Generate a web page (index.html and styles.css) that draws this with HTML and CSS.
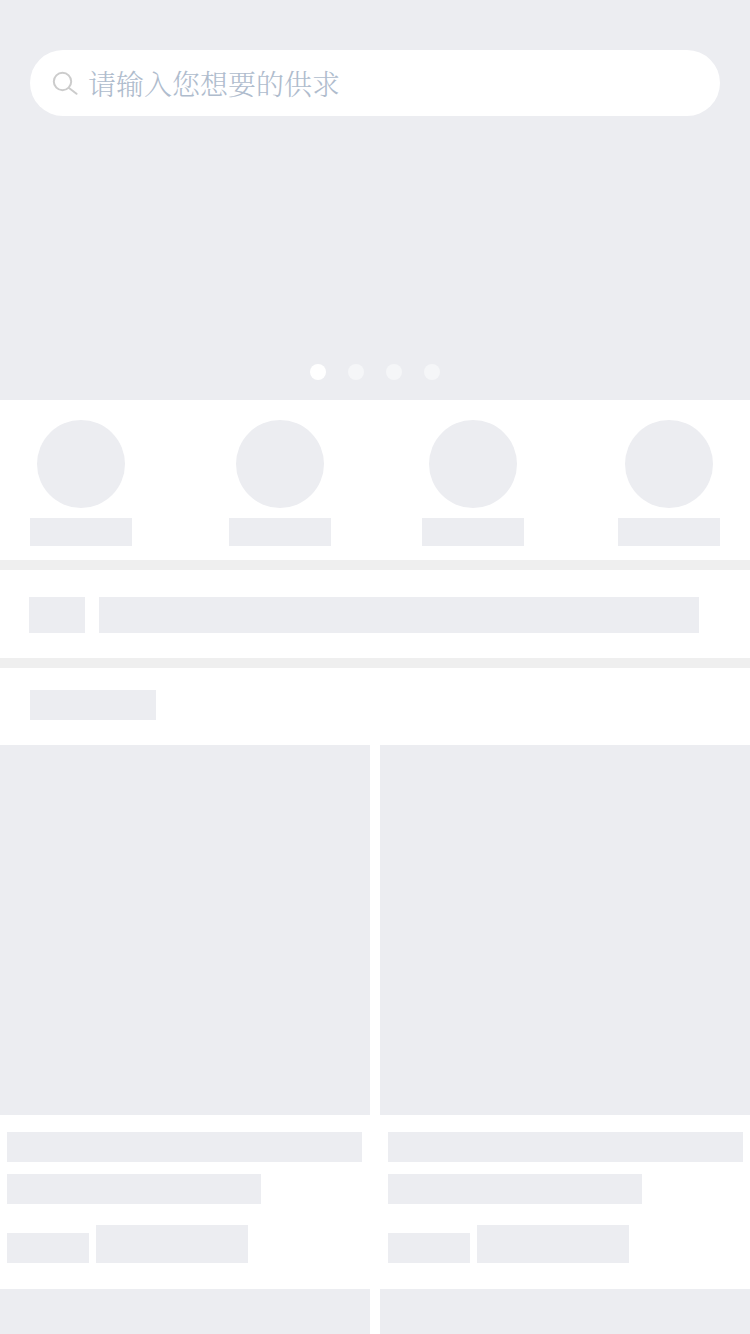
FILE: index.html
```html
<!DOCTYPE html>
<html lang="zh-CN">
<head>
<meta charset="utf-8">
<meta name="viewport" content="width=device-width, initial-scale=1">
<title>供求</title>
<link rel="stylesheet" href="styles.css">
</head>
<body>
<div class="page">
  <header class="banner">
    <form class="search" role="search">
      <svg class="search-icon" viewBox="0 0 26 24" aria-hidden="true">
        <circle cx="10.5" cy="10.5" r="8.7"/>
        <path d="M17 17L24.5 22.8"/>
      </svg>
      <input class="search-input" type="search" aria-label="请输入您想要的供求" placeholder="请输入您想要的供求">
    </form>
    <div class="dots">
      <span class="dot dot-active"></span>
      <span class="dot"></span>
      <span class="dot"></span>
      <span class="dot"></span>
    </div>
  </header>
  <main class="content">
    <section class="categories">
      <div class="category"><div class="avatar"></div><div class="label"></div></div>
      <div class="category"><div class="avatar"></div><div class="label"></div></div>
      <div class="category"><div class="avatar"></div><div class="label"></div></div>
      <div class="category"><div class="avatar"></div><div class="label"></div></div>
    </section>
    <section class="notice">
      <div class="notice-tag"></div>
      <div class="notice-text"></div>
    </section>
    <div class="heading"><div class="heading-bar"></div></div>
    <section class="products">
      <article class="product">
        <div class="photo"></div>
        <div class="details">
          <div class="line"></div>
          <div class="line line-short"></div>
          <div class="meta"><div class="price"></div><div class="action"></div></div>
        </div>
      </article>
      <article class="product">
        <div class="photo"></div>
        <div class="details">
          <div class="line"></div>
          <div class="line line-short"></div>
          <div class="meta"><div class="price"></div><div class="action"></div></div>
        </div>
      </article>
    </section>
    <section class="products products-next">
      <div class="placeholder"></div>
      <div class="placeholder"></div>
    </section>
  </main>
</div>
</body>
</html>
```
FILE: styles.css
```css
:root {
  --block: #ecedf1;
  --divider: #efefef;
}

* {
  box-sizing: border-box;
}

body {
  margin: 0;
  background: #fff;
  font-family: "Noto Serif CJK SC", "Noto Sans CJK SC Light", "Noto Sans CJK SC", sans-serif;
}

.page,
.content {
  display: flex;
  flex-direction: column;
}

.page {
  min-height: 100vh;
}

.content {
  flex: 1;
}

.banner {
  display: flex;
  flex-direction: column;
  justify-content: space-between;
  min-height: 400px;
  padding: 50px 30px 20px;
  background: var(--block);
}

.search {
  display: flex;
  align-items: center;
  gap: 10px;
  height: 66px;
  padding: 0 30px 0 22px;
  border-radius: 33px;
  background: #fff;
}

.search-icon {
  flex: none;
  width: 26px;
  height: 24px;
  fill: none;
  stroke: #ccc;
  stroke-width: 2;
  stroke-linecap: round;
}

.search-input {
  flex: 1;
  min-width: 0;
  height: 42px;
  padding: 0;
  border: 0;
  outline: 0;
  background: transparent;
  color: #65758c;
  font-family: inherit;
  font-size: 28px;
  font-weight: 300;
  appearance: none;
}

.search-input::placeholder {
  color: #afbccd;
  opacity: 1;
}

.dots {
  display: flex;
  justify-content: center;
  gap: 22px;
}

.dot {
  width: 16px;
  height: 16px;
  border-radius: 50%;
  background: #f5f6f8;
}

.dot-active {
  background: #fff;
}

.categories {
  display: grid;
  grid-template-columns: 199fr 193fr 196fr 102fr;
  padding: 20px 30px 14px;
  border-bottom: 10px solid var(--divider);
}

.category {
  display: flex;
  flex-direction: column;
  align-items: center;
  gap: 10px;
  width: 102px;
}

.avatar {
  width: 88px;
  height: 88px;
  border-radius: 50%;
  background: var(--block);
}

.label {
  width: 102px;
  height: 28px;
  background: var(--block);
}

.notice {
  display: flex;
  gap: 14px;
  padding: 27px 51px 25px 29px;
  border-bottom: 10px solid var(--divider);
}

.notice-tag {
  width: 56px;
  height: 36px;
  background: var(--block);
}

.notice-text {
  flex: 1;
  height: 36px;
  background: var(--block);
}

.heading {
  padding: 22px 30px 25px;
}

.heading-bar {
  width: 126px;
  height: 30px;
  background: var(--block);
}

.products {
  display: grid;
  grid-template-columns: 1fr 1fr;
  gap: 10px;
}

.products-next {
  flex: 1;
  min-height: 45px;
}

.photo {
  aspect-ratio: 1;
  background: var(--block);
}

.placeholder {
  background: var(--block);
}

.details {
  display: flex;
  flex-direction: column;
  gap: 12px;
  padding: 17px 8px 26px 7px;
}

.product:last-child .details {
  padding-right: 7px;
  padding-left: 8px;
}

.line {
  height: 30px;
  background: var(--block);
}

.line-short {
  width: 254px;
}

.meta {
  display: flex;
  align-items: flex-end;
  gap: 7px;
  padding-top: 9px;
}

.price {
  width: 82px;
  height: 30px;
  background: var(--block);
}

.action {
  width: 152px;
  height: 38px;
  background: var(--block);
}
```
